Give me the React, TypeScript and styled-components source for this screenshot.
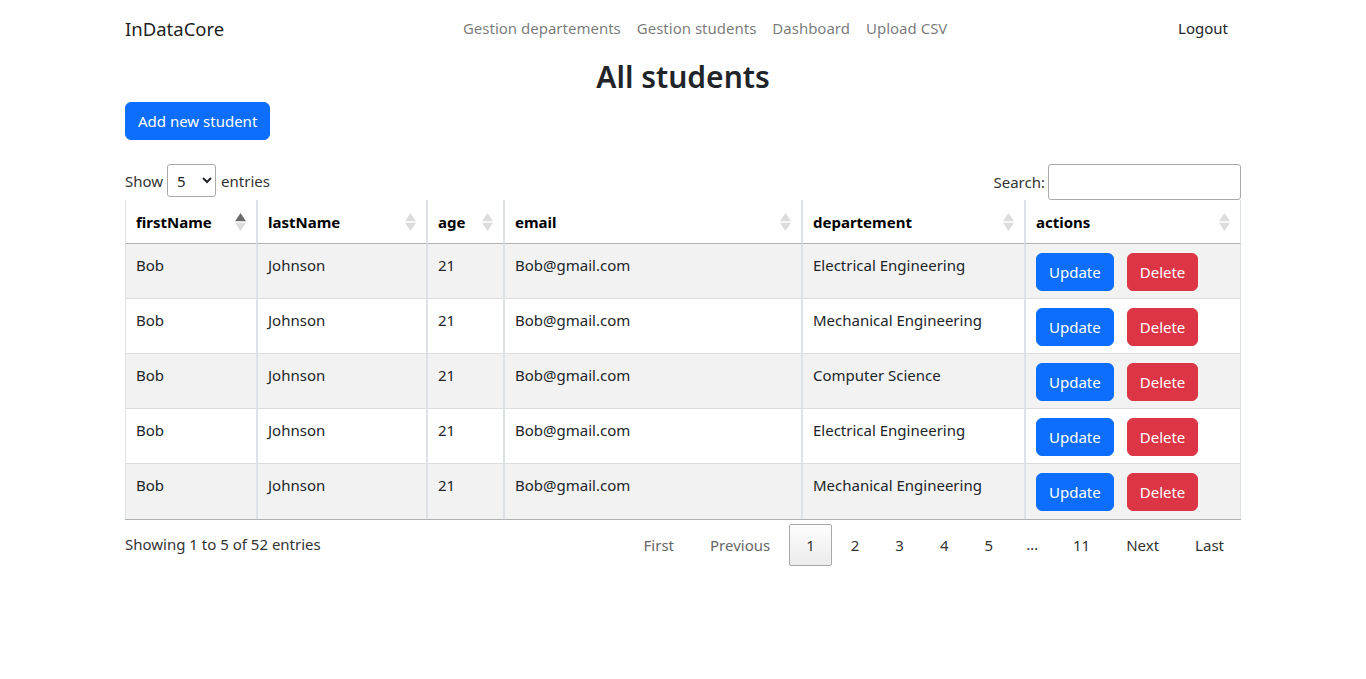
import React from "react";
import styled, { createGlobalStyle } from "styled-components";

const GlobalStyle = createGlobalStyle`
  * { box-sizing: border-box; }
  body {
    margin: 0;
    font-family: "Segoe UI", "Noto Sans", "Liberation Sans", sans-serif;
    font-size: 15px;
    line-height: 24px;
    color: #212529;
    background: #fff;
  }
`;

const Container = styled.div`
  width: 1140px;
  margin: 0 auto;
  padding: 0 12px;
`;

const Navbar = styled.nav`
  display: flex;
  align-items: center;
  height: 56px;
  padding: 8px 0;
`;

const Brand = styled.a`
  font-size: 18.5px;
  color: rgba(0, 0, 0, 0.9);
  margin-right: 16px;
  text-decoration: none;
  line-height: 30px;
  padding-top: 1px;
`;

const NavList = styled.ul`
  display: flex;
  list-style: none;
  margin: 0 auto;
  padding: 0;
`;

const NavLink = styled.a<{ $dark?: boolean }>`
  display: block;
  padding: 8px;
  margin-right: ${(p) => (p.$dark ? "5px" : "0")};
  color: ${(p) => (p.$dark ? "#212529" : "rgba(0,0,0,0.55)")};
  text-decoration: none;
`;

const Title = styled.h2`
  text-align: center;
  font-size: 30px;
  font-weight: 600;
  line-height: 38px;
  margin: 0 0 6px;
  padding-top: 2px;
`;

const Btn = styled.button<{ $variant?: "primary" | "danger" }>`
  font-family: inherit;
  font-size: 15px;
  line-height: 24px;
  padding: 6px 12px;
  border-radius: 6px;
  border: 1px solid ${(p) => (p.$variant === "danger" ? "#dc3545" : "#0d6efd")};
  background: ${(p) => (p.$variant === "danger" ? "#dc3545" : "#0d6efd")};
  color: #fff;
  cursor: pointer;
`;

const Controls = styled.div`
  display: flex;
  justify-content: space-between;
  align-items: flex-start;
  margin-top: 24px;
  height: 36px;
`;

const Label = styled.label`
  display: flex;
  align-items: center;
  color: #333;
`;

const ShowLabel = styled(Label)`
  align-items: flex-start;
  line-height: 34px;
`;

const Select = styled.select`
  width: 49px;
  height: 33px;
  margin: 0 5px 0 4px;
  padding: 4px 5px;
  border: 1px solid #aaa;
  border-radius: 3px;
  background: #fff;
  font-family: inherit;
  font-size: 15px;
  color: #212529;
`;

const SearchInput = styled.input`
  width: 193px;
  height: 36px;
  margin-left: 3px;
  padding: 5px;
  border: 1px solid #aaa;
  border-radius: 3px;
  font-family: inherit;
  font-size: 15px;
`;

const Table = styled.table`
  width: 100%;
  table-layout: fixed;
  border-collapse: separate;
  border-spacing: 0;
  border-bottom: 1px solid rgba(0, 0, 0, 0.3);
`;

const Th = styled.th`
  position: relative;
  text-align: left;
  font-weight: 700;
  padding: 10px 28px 9px 10px;
  line-height: 24px;
  border-left: 1px solid #dee2e6;
  border-right: 1px solid #dee2e6;
  border-bottom: 1px solid rgba(0, 0, 0, 0.3);
  color: #000;
`;

const SortIcon = styled.svg`
  position: absolute;
  right: 10px;
  top: 50%;
  margin-top: -10px;
`;

const Tr = styled.tr<{ $striped: boolean }>`
  background: ${(p) => (p.$striped ? "#f2f2f2" : "#fff")};
  &:not(:last-child) td {
    border-bottom: 1px solid #dddddd;
  }
`;

const Td = styled.td`
  vertical-align: top;
  padding: 9px 10px 8px;
  height: 55px;
  line-height: 24px;
  border-left: 1px solid #dee2e6;
  border-right: 1px solid #dee2e6;
  color: #212529;
`;

const ActionCell = styled(Td)`
  padding: 9px 10px 7px;
`;

const Actions = styled.div`
  display: flex;
  gap: 13px;
`;

const Footer = styled.div`
  display: flex;
  justify-content: space-between;
  align-items: flex-start;
  padding-top: 4px;
`;

const Info = styled.div`
  padding-top: 8px;
  color: #333;
`;

const Pagination = styled.div`
  display: flex;
`;

const PageBtn = styled.a<{ $active?: boolean; $disabled?: boolean }>`
  display: block;
  min-width: 24px;
  text-align: center;
  padding: 8px 16px;
  margin-left: 2px;
  line-height: 24px;
  border: 1px solid ${(p) => (p.$active ? "#a8a8a8" : "transparent")};
  border-radius: 2px;
  color: ${(p) => (p.$disabled ? "#666" : "#333")};
  background: ${(p) =>
    p.$active ? "linear-gradient(to bottom, #fdfdfd 0%, #ececec 100%)" : "transparent"};
  text-decoration: none;
`;

const Ellipsis = styled.span`
  padding: 8px 16px;
  line-height: 24px;
  color: #333;
`;

const columns: { key: string; width: number; active?: boolean }[] = [
  { key: "firstName", width: 132, active: true },
  { key: "lastName", width: 170 },
  { key: "age", width: 77 },
  { key: "email", width: 298 },
  { key: "departement", width: 223 },
  { key: "actions", width: 216 },
];

const rows = [
  "Electrical Engineering",
  "Mechanical Engineering",
  "Computer Science",
  "Electrical Engineering",
  "Mechanical Engineering",
];

function Sort({ active }: { active?: boolean }) {
  return (
    <SortIcon width="11" height="20" viewBox="0 0 11 20">
      <path d="M0 9.2 L5.5 1 L11 9.2 Z" fill={active ? "#6b6b6b" : "#dcdcdc"} />
      <path d="M0 10.8 L5.5 19 L11 10.8 Z" fill="#dcdcdc" />
    </SortIcon>
  );
}

export default function App() {
  return (
    <>
      <GlobalStyle />
      <Container>
        <Navbar>
          <Brand href="#">InDataCore</Brand>
          <NavList>
            <li><NavLink href="#">Gestion departements</NavLink></li>
            <li><NavLink href="#">Gestion students</NavLink></li>
            <li><NavLink href="#">Dashboard</NavLink></li>
            <li><NavLink href="#">Upload CSV</NavLink></li>
          </NavList>
          <NavLink href="#" $dark>Logout</NavLink>
        </Navbar>
        <Title>All students</Title>
        <Btn>Add new student</Btn>
        <Controls>
          <ShowLabel>
            Show
            <Select defaultValue="5">
              <option value="5">5</option>
              <option value="10">10</option>
              <option value="25">25</option>
            </Select>
            entries
          </ShowLabel>
          <Label>
            Search:
            <SearchInput type="search" />
          </Label>
        </Controls>
        <Table>
          <colgroup>
            {columns.map((c) => (
              <col key={c.key} style={{ width: c.width }} />
            ))}
          </colgroup>
          <thead>
            <tr>
              {columns.map((c) => (
                <Th key={c.key}>
                  {c.key}
                  <Sort active={c.active} />
                </Th>
              ))}
            </tr>
          </thead>
          <tbody>
            {rows.map((dep, i) => (
              <Tr key={i} $striped={i % 2 === 0}>
                <Td>Bob</Td>
                <Td>Johnson</Td>
                <Td>21</Td>
                <Td>Bob@gmail.com</Td>
                <Td>{dep}</Td>
                <ActionCell>
                  <Actions>
                    <Btn>Update</Btn>
                    <Btn $variant="danger">Delete</Btn>
                  </Actions>
                </ActionCell>
              </Tr>
            ))}
          </tbody>
        </Table>
        <Footer>
          <Info>Showing 1 to 5 of 52 entries</Info>
          <Pagination>
            <PageBtn $disabled>First</PageBtn>
            <PageBtn $disabled>Previous</PageBtn>
            <PageBtn $active>1</PageBtn>
            <PageBtn>2</PageBtn>
            <PageBtn>3</PageBtn>
            <PageBtn>4</PageBtn>
            <PageBtn>5</PageBtn>
            <Ellipsis>…</Ellipsis>
            <PageBtn>11</PageBtn>
            <PageBtn>Next</PageBtn>
            <PageBtn>Last</PageBtn>
          </Pagination>
        </Footer>
      </Container>
    </>
  );
}
